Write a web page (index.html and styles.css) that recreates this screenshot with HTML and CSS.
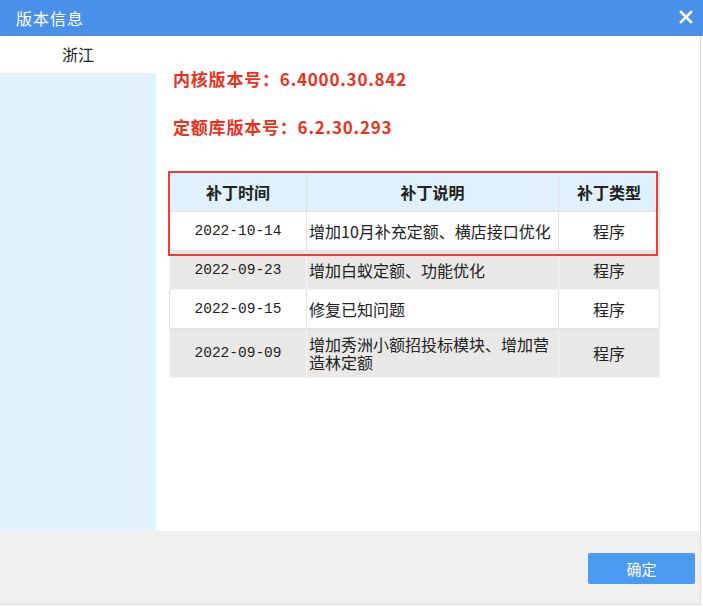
FILE: index.html
```html
<!DOCTYPE html>
<html lang="zh">
<head>
<meta charset="utf-8">
<title>版本信息</title>
<link rel="stylesheet" href="styles.css">
</head>
<body>
<div class="window">
  <div class="titlebar">
    <span class="title">版本信息</span>
    <span class="close">
      <svg width="14" height="14" viewBox="0 0 14 14"><path d="M2 2 L12 12 M12 2 L2 12" stroke="#fff" stroke-width="2.6" stroke-linecap="square"/></svg>
    </span>
  </div>
  <div class="main">
    <div class="side">
      <div class="side-item">浙江</div>
      <div class="side-rest"></div>
    </div>
    <div class="content">
      <div class="version">内核版本号：6.4000.30.842</div>
      <div class="version second">定额库版本号：6.2.30.293</div>
      <div class="table-wrap">
        <table class="patches">
          <thead>
            <tr><th class="c1">补丁时间</th><th class="c2">补丁说明</th><th class="c3">补丁类型</th></tr>
          </thead>
          <tbody>
            <tr class="odd"><td class="date">2022-10-14</td><td class="desc">增加10月补充定额、横店接口优化</td><td class="type">程序</td></tr>
            <tr class="even"><td class="date">2022-09-23</td><td class="desc">增加白蚁定额、功能优化</td><td class="type">程序</td></tr>
            <tr class="odd"><td class="date">2022-09-15</td><td class="desc">修复已知问题</td><td class="type">程序</td></tr>
            <tr class="even tall"><td class="date">2022-09-09</td><td class="desc">增加秀洲小额招投标模块、增加营造林定额</td><td class="type">程序</td></tr>
          </tbody>
        </table>
        <div class="highlight"></div>
      </div>
    </div>
  </div>
  <div class="footer">
    <button class="ok">确定</button>
  </div>
</div>
</body>
</html>
```
FILE: styles.css
```css
* { box-sizing: border-box; }
html, body { margin: 0; padding: 0; background: #fff; }
body {
  width: 703px;
  height: 607px;
  overflow: hidden;
  font-family: "Noto Sans CJK SC", "Noto Sans", sans-serif;
  color: #222;
}
.window {
  width: 703px;
  height: 605px;
  display: flex;
  flex-direction: column;
}
.titlebar {
  height: 36px;
  background: #4a90e8;
  display: flex;
  align-items: center;
  justify-content: space-between;
  padding: 0 10px 0 16px;
  color: #fff;
}
.title { font-size: 16px; letter-spacing: 1px; }
.close { display: flex; width: 14px; height: 14px; margin-top: -2px; }
.main {
  height: 495px;
  display: flex;
  margin-right: 2px;
  border-right: 1px solid #dcdcdc;
}
.side {
  width: 156px;
  display: flex;
  flex-direction: column;
}
.side-item {
  height: 37px;
  background: #fff;
  font-size: 16px;
  padding-left: 62px;
  padding-bottom: 2px;
  line-height: 36px;
}
.side-rest { flex: 1; background: #e1f4fd; }
.content {
  flex: 1;
  padding: 30px 0 0 13px;
  background: #fff;
}
.version {
  color: #e6321f;
  font-weight: bold;
  font-size: 17px;
  line-height: 26px;
  padding-left: 4px;
  letter-spacing: 0.8px;
}
.version.second { margin-top: 22px; }
.table-wrap {
  position: relative;
  width: 490px;
  margin-top: 32px;
}
.patches {
  width: 490px;
  border-collapse: collapse;
  table-layout: fixed;
  font-size: 16px;
}
.patches th, .patches td {
  border: 1px solid #e2e2e2;
  padding: 0 2px;
}
.patches th {
  background: #dff1fc;
  height: 39px;
  font-weight: bold;
  color: #222;
}
.c1 { width: 137px; }
.c2 { width: 252px; }
.c3 { width: 101px; }
.patches td { height: 39px; line-height: 18px; }
.patches tr.odd td { background: #fff; }
.patches tr.even td { background: #e9e8e6; border-color: #f4f4f4; }
.patches tr.tall td { height: 49px; }
.date {
  text-align: center;
  font-family: "Liberation Mono", "Noto Sans CJK SC", monospace;
  font-size: 14.5px;
}
.desc { text-align: left; padding-left: 2px; }
.type { text-align: center; }
.highlight {
  position: absolute;
  left: -1px;
  top: -1px;
  width: 490px;
  height: 85px;
  border: 2px solid #e8403d;
}
.footer {
  height: 74px;
  background: #f0f0f0;
  display: flex;
  align-items: center;
  justify-content: flex-end;
  padding: 0 5px 0 0;
  margin-right: 2px;
  border-right: 1px solid #dcdcdc;
  border-bottom: 1px solid #dcdcdc;
}
.ok {
  width: 107px;
  height: 31px;
  background: #4b9bf5;
  border: none;
  border-radius: 2px;
  color: #fff;
  font-family: "Noto Sans CJK SC", sans-serif;
  font-size: 15px;
  margin-top: 2px;
}
```
